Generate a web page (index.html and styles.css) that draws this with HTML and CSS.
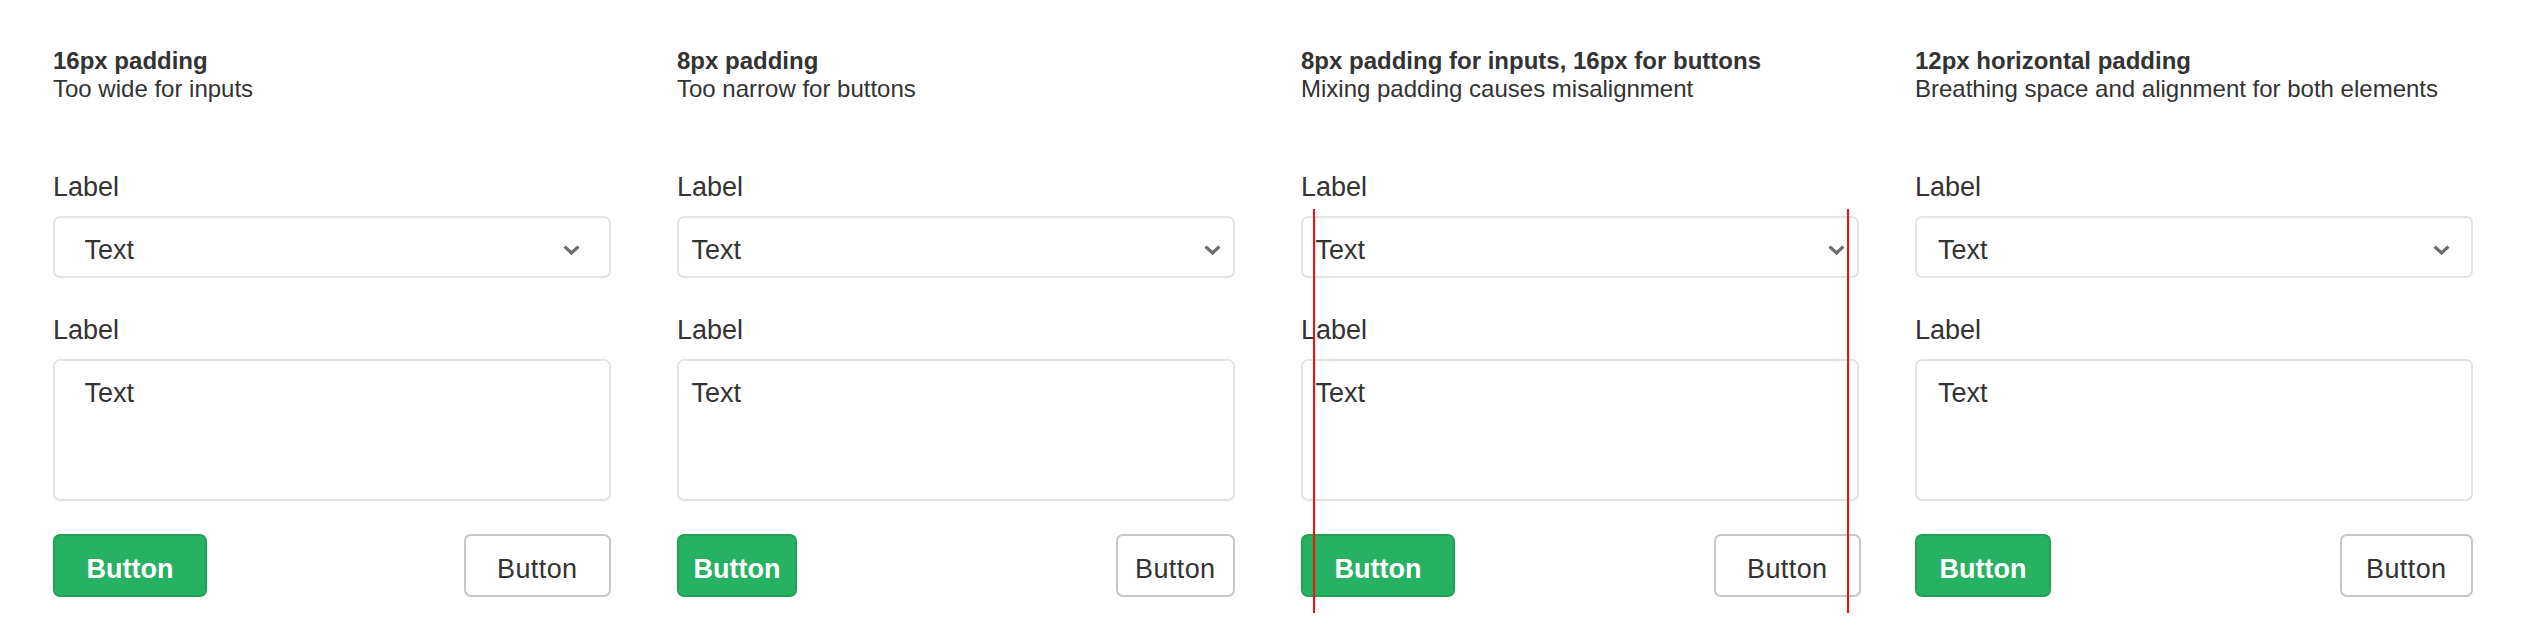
FILE: index.html
```html
<!DOCTYPE html>
<html lang="en">
<head>
<meta charset="utf-8">
<title>Padding examples</title>
<link rel="stylesheet" href="styles.css">
</head>
<body>
<main class="page">
  <section class="example example--p16">
    <header class="example__head">
      <h2 class="example__title">16px padding</h2>
      <p class="example__desc">Too wide for inputs</p>
    </header>
    <div class="form">
      <div class="field">
        <div class="field__label">Label</div>
        <div class="control control--select"><span>Text</span><svg class="chevron" width="17" height="10" viewBox="0 0 17 10"><path d="M1.6 1.6 L8.5 8 L15.4 1.6" /></svg></div>
      </div>
      <div class="field">
        <div class="field__label">Label</div>
        <div class="control control--area">Text</div>
      </div>
      <div class="actions">
        <button class="btn btn--primary">Button</button>
        <button class="btn btn--ghost">Button</button>
      </div>
    </div>
  </section>

  <section class="example example--p8">
    <header class="example__head">
      <h2 class="example__title">8px padding</h2>
      <p class="example__desc">Too narrow for buttons</p>
    </header>
    <div class="form">
      <div class="field">
        <div class="field__label">Label</div>
        <div class="control control--select"><span>Text</span><svg class="chevron" width="17" height="10" viewBox="0 0 17 10"><path d="M1.6 1.6 L8.5 8 L15.4 1.6" /></svg></div>
      </div>
      <div class="field">
        <div class="field__label">Label</div>
        <div class="control control--area">Text</div>
      </div>
      <div class="actions">
        <button class="btn btn--primary">Button</button>
        <button class="btn btn--ghost">Button</button>
      </div>
    </div>
  </section>

  <section class="example example--mixed">
    <header class="example__head">
      <h2 class="example__title">8px padding for inputs, 16px for buttons</h2>
      <p class="example__desc">Mixing padding causes misalignment</p>
    </header>
    <div class="form">
      <div class="field">
        <div class="field__label">Label</div>
        <div class="control control--select"><span>Text</span><svg class="chevron" width="17" height="10" viewBox="0 0 17 10"><path d="M1.6 1.6 L8.5 8 L15.4 1.6" /></svg></div>
      </div>
      <div class="field">
        <div class="field__label">Label</div>
        <div class="control control--area">Text</div>
      </div>
      <div class="actions">
        <button class="btn btn--primary">Button</button>
        <button class="btn btn--ghost">Button</button>
      </div>
      <span class="guide guide--left"></span>
      <span class="guide guide--right"></span>
    </div>
  </section>

  <section class="example example--p12">
    <header class="example__head">
      <h2 class="example__title">12px horizontal padding</h2>
      <p class="example__desc">Breathing space and alignment for both elements</p>
    </header>
    <div class="form">
      <div class="field">
        <div class="field__label">Label</div>
        <div class="control control--select"><span>Text</span><svg class="chevron" width="17" height="10" viewBox="0 0 17 10"><path d="M1.6 1.6 L8.5 8 L15.4 1.6" /></svg></div>
      </div>
      <div class="field">
        <div class="field__label">Label</div>
        <div class="control control--area">Text</div>
      </div>
      <div class="actions">
        <button class="btn btn--primary">Button</button>
        <button class="btn btn--ghost">Button</button>
      </div>
    </div>
  </section>
</main>
</body>
</html>
```

FILE: styles.css
```css
* {
  box-sizing: border-box;
}

html, body {
  margin: 0;
  background: #ffffff;
}

body {
  font-family: "Liberation Sans", Arial, Helvetica, sans-serif;
  color: #333333;
  min-height: 644px;
}

.page {
  display: flex;
  gap: 66px;
  padding: 47px 0 0 53px;
}

.example {
  flex: none;
  width: 558px;
}

.example--mixed {
  margin-right: -10px;
}

.example__head {
  margin-bottom: 65px;
}

.example__title {
  margin: 0;
  font-size: 24px;
  line-height: 27.5px;
  font-weight: 700;
}

.example__desc {
  margin: 0;
  font-size: 24px;
  line-height: 27.5px;
  font-weight: 400;
}

.form {
  position: relative;
}

.field + .field {
  margin-top: 32px;
}

.field__label {
  font-size: 27px;
  line-height: 40px;
  margin-bottom: 9px;
}

.control {
  border: 2px solid #e3e3e3;
  border-radius: 7px;
  background: #fff;
  font-size: 27px;
  line-height: 40px;
  padding-top: 12px;
  padding-bottom: 6px;
}

.control--select {
  display: flex;
  align-items: center;
  justify-content: space-between;
  height: 62px;
}

.control--area {
  height: 142px;
}

.chevron {
  display: block;
  flex: none;
}

.chevron path {
  fill: none;
  stroke: #6a6a6a;
  stroke-width: 3.2;
}

.actions {
  margin-top: 33px;
  display: flex;
  justify-content: space-between;
  align-items: flex-start;
}

.btn {
  font-family: inherit;
  font-size: 27px;
  line-height: 40px;
  height: 63px;
  padding-top: 13px;
  padding-bottom: 6px;
  border: 2px solid transparent;
  border-radius: 7px;
  margin: 0;
  cursor: pointer;
}

.btn--primary {
  background: #27b163;
  border-color: #21a056;
  color: #ffffff;
  font-weight: 700;
}

.btn--ghost {
  background: #ffffff;
  border-color: #c7c7c7;
  color: #333333;
  font-weight: 400;
  letter-spacing: 0.4px;
}

/* padding variants */
.example--p16 .control { padding-left: 29.5px; padding-right: 29.5px; }
.example--p16 .btn { padding-left: 31.5px; padding-right: 31.5px; }

.example--p8 .control { padding-left: 12.5px; padding-right: 12.5px; }
.example--p8 .btn { padding-left: 14.5px; padding-right: 14.5px; }
.example--p8 .btn--ghost { padding-left: 17.5px; padding-right: 17.5px; }

.example--mixed .control { padding-left: 12.5px; padding-right: 12.5px; }
.example--mixed .btn { padding-left: 31.5px; padding-right: 31.5px; }
.example--mixed .btn--ghost { margin-right: -2px; }

.example--p12 .control { padding-left: 21px; padding-right: 21px; }
.example--p12 .btn { padding-left: 22.5px; padding-right: 22.5px; }
.example--p12 .btn--ghost { padding-left: 24.5px; padding-right: 24.5px; }

/* alignment guides */
.guide {
  position: absolute;
  z-index: 2;
  top: 42px;
  height: 404px;
  width: 2px;
  background: #ff0a0a;
}

.guide--left {
  left: 12px;
}

.guide--right {
  right: 10px;
}
```
